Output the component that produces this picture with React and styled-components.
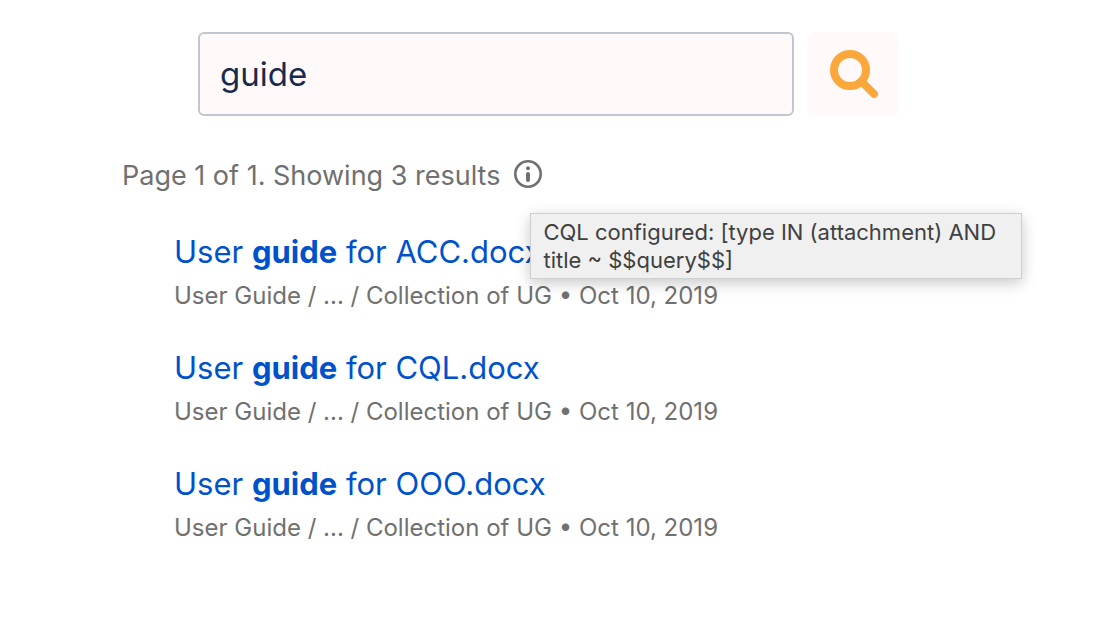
import React, { useState } from 'react';
import styled, { createGlobalStyle } from 'styled-components';


const GlobalStyle = createGlobalStyle`
    *{
        box-sizing: border-box;
    }
    body{
        margin: 0;
        background-color: #fff;
        font-family: Inter, "Liberation Sans", sans-serif;
    }
`
const Page = styled.main`
    padding: 32px 128px 32px 122px;

    @media screen and (max-width:800px){
        padding: 24px;
    }
`
const SearchForm = styled.form`
    display: flex;
    gap: 14px;
    max-width: 700px;
    height: 84px;
    margin: 0 auto;
`
const SearchInput = styled.input`
    flex: 1;
    min-width: 0;
    padding: 0 20px;
    border: 2px solid #c1c7d0;
    border-radius: 6px;
    background-color: #fffaf9;
    color: #172b4d;
    font-family: inherit;
    font-size: 33px;
    outline: none;
`
const SearchButton = styled.button`
    display: flex;
    justify-content: center;
    align-items: center;
    width: 90px;
    padding: 0;
    border: none;
    border-radius: 6px;
    background-color: #fffaf9;
    color: #faa73c;
    cursor: pointer;
`
const Summary = styled.div`
    display: flex;
    align-items: center;
    gap: 14px;
    margin-top: 40px;
    color: #707070;
    font-size: 27px;
    line-height: 40px;

    p{
        margin: 0;
    }
`
const Info = styled.span`
    position: relative;
    display: flex;
    margin-bottom: 4px;
`
const InfoButton = styled.button`
    display: flex;
    padding: 0;
    border: none;
    background: none;
    color: inherit;
    cursor: help;
`
const Tooltip = styled.span`
    position: absolute;
    z-index: 1;
    top: 53px;
    left: 16px;
    width: 492px;
    padding: 4px 12px;
    border: 1px solid #cfcfcf;
    background-color: #f0f0f0;
    box-shadow: 0 4px 14px rgba(0, 0, 0, 0.22);
    color: #404040;
    font-size: 22px;
    line-height: 28px;
`
const Results = styled.ul`
    display: flex;
    flex-direction: column;
    gap: 36px;
    margin: 36px 0 0;
    padding: 0 0 0 52px;
    list-style: none;
`
const ResultLink = styled.a`
    display: block;
    color: #0052cc;
    font-size: 31px;
    line-height: 40px;
    text-decoration: none;

    &:hover{
        text-decoration: underline;
    }
`
const ResultMeta = styled.p`
    margin: 8px 0 0;
    color: #707070;
    font-size: 24px;
    line-height: 32px;
`

const results = ['ACC', 'CQL', 'OOO'];

const App = () => {
    const [query,setQuery] = useState('guide');

    return (
        <>
            <GlobalStyle/>
            <Page>
                <SearchForm role="search" onSubmit={(e) => e.preventDefault()}>
                    <SearchInput
                        type="text"
                        aria-label="Search"
                        value={query}
                        onChange={(e) => setQuery(e.target.value)}
                    />
                    <SearchButton type="submit" aria-label="Search">
                        <svg width="50" height="50" viewBox="0 0 50 50" fill="none" stroke="currentColor" aria-hidden="true">
                            <circle cx="22" cy="21" r="16" strokeWidth="8"/>
                            <path d="M34 33L46 45" strokeWidth="8" strokeLinecap="round"/>
                        </svg>
                    </SearchButton>
                </SearchForm>
                <Summary>
                    <p>Page 1 of 1. Showing 3 results</p>
                    <Info>
                        <InfoButton type="button" aria-label="Info" aria-describedby="cql-tip">
                            <svg width="28" height="28" viewBox="0 0 28 28" fill="none" stroke="currentColor" aria-hidden="true">
                                <circle cx="14" cy="14" r="12.7" strokeWidth="2.6"/>
                                <circle cx="14" cy="8.2" r="2" fill="currentColor" stroke="none"/>
                                <path d="M14 14v6" strokeWidth="4" strokeLinecap="round"/>
                            </svg>
                        </InfoButton>
                        <Tooltip id="cql-tip" role="tooltip">
                            CQL configured: [type IN (attachment) AND title ~ $$query$$]
                        </Tooltip>
                    </Info>
                </Summary>
                <Results>
                    {results.map((name) => (
                        <li key={name}>
                            <ResultLink href="#">
                                User <b>guide</b> for {name}.docx
                            </ResultLink>
                            <ResultMeta>User Guide / ... / Collection of UG • Oct 10, 2019</ResultMeta>
                        </li>
                    ))}
                </Results>
            </Page>
        </>
    );
};

export default App;
